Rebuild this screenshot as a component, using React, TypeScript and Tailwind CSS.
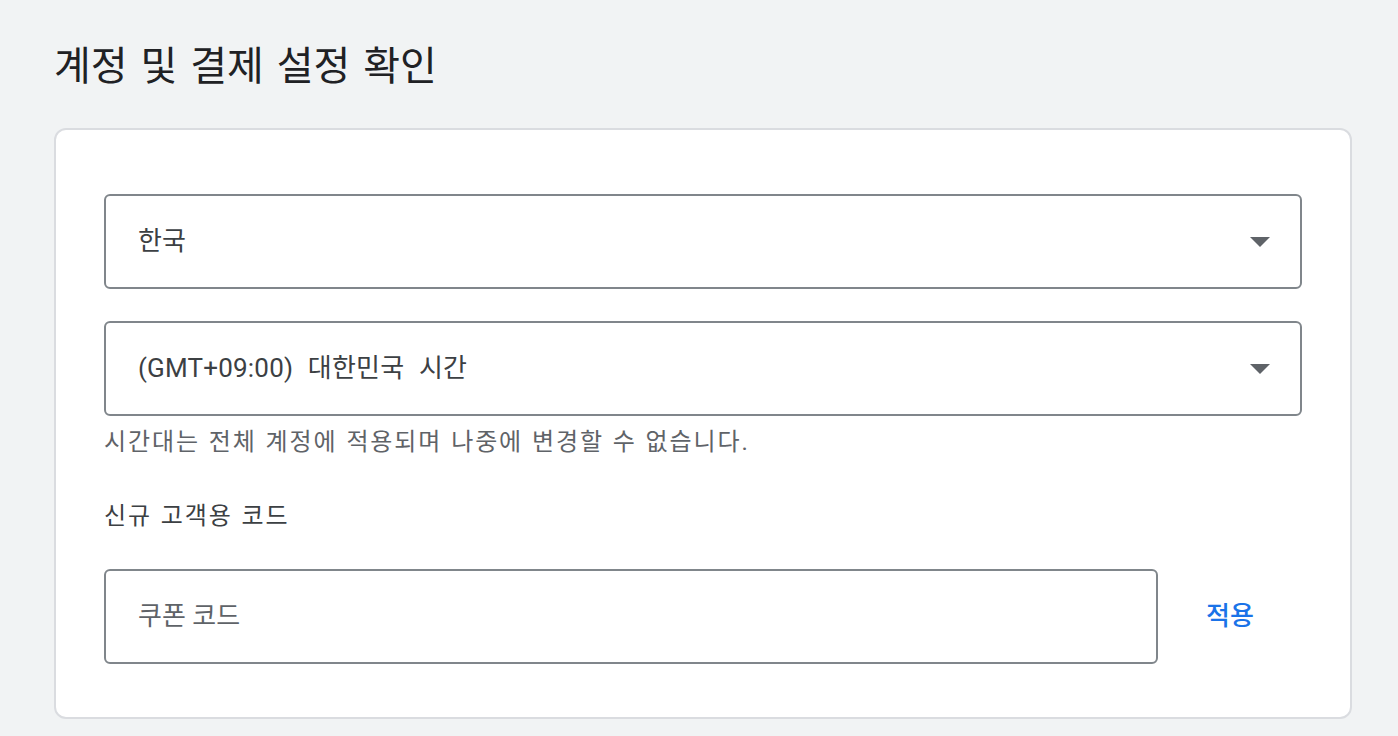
function Caret() {
    return (
        <svg width="20" height="10" viewBox="0 0 20 10" className="shrink-0">
            <path d="M0 0h20L10 10z" fill="#5f6368" />
        </svg>
    )
}

function SelectBox({ value }: { value: string }) {
    return (
        <div className="h-[95px] w-full flex items-center justify-between pl-[32px] pr-[30px] border-2 border-[#80868b] rounded-[6px] bg-white">
            <span className="text-[26px] text-[#3c4043] tracking-[0.2px] [word-spacing:8px]">{value}</span>
            <Caret />
        </div>
    )
}

export default function App() {
    return (
        <div lang="ko" className="min-h-screen w-full bg-[#f1f3f4] pt-[41px] pl-[54px] pr-[46px] pb-[19px]" style={{ fontFamily: "Roboto, 'Noto Sans CJK KR', sans-serif" }}>
            <h1 className="text-[40px] leading-[52px] text-[#202124] font-normal mb-[35px] [word-spacing:3px]">계정 및 결제 설정 확인</h1>

            <div className="bg-white border-2 border-[#dadce0] rounded-[12px] pt-[64px] px-[48px] pb-[53px]">
                <SelectBox value="한국" />
                <div className="mt-[32px]">
                    <SelectBox value="(GMT+09:00) 대한민국 시간" />
                </div>
                <p className="mt-[10px] text-[24px] leading-[32px] text-[#5f6368] tracking-[1.9px] [word-spacing:1px]">
                    시간대는 전체 계정에 적용되며 나중에 변경할 수 없습니다.
                </p>

                <p className="mt-[42px] text-[24px] leading-[32px] text-[#3c4043] tracking-[1.9px] [word-spacing:1px]">신규 고객용 코드</p>

                <div className="mt-[37px] flex items-center">
                    <div className="h-[95px] w-[1054px] flex items-center pl-[32px] border-2 border-[#80868b] rounded-[6px]">
                        <input
                            placeholder="쿠폰 코드"
                            className="w-full outline-none text-[26px] text-[#202124] placeholder:text-[#5f6368] bg-transparent"
                        />
                    </div>
                    <button className="flex-1 text-[26px] font-medium text-[#1a73e8] text-center">적용</button>
                </div>
            </div>
        </div>
    )
}
